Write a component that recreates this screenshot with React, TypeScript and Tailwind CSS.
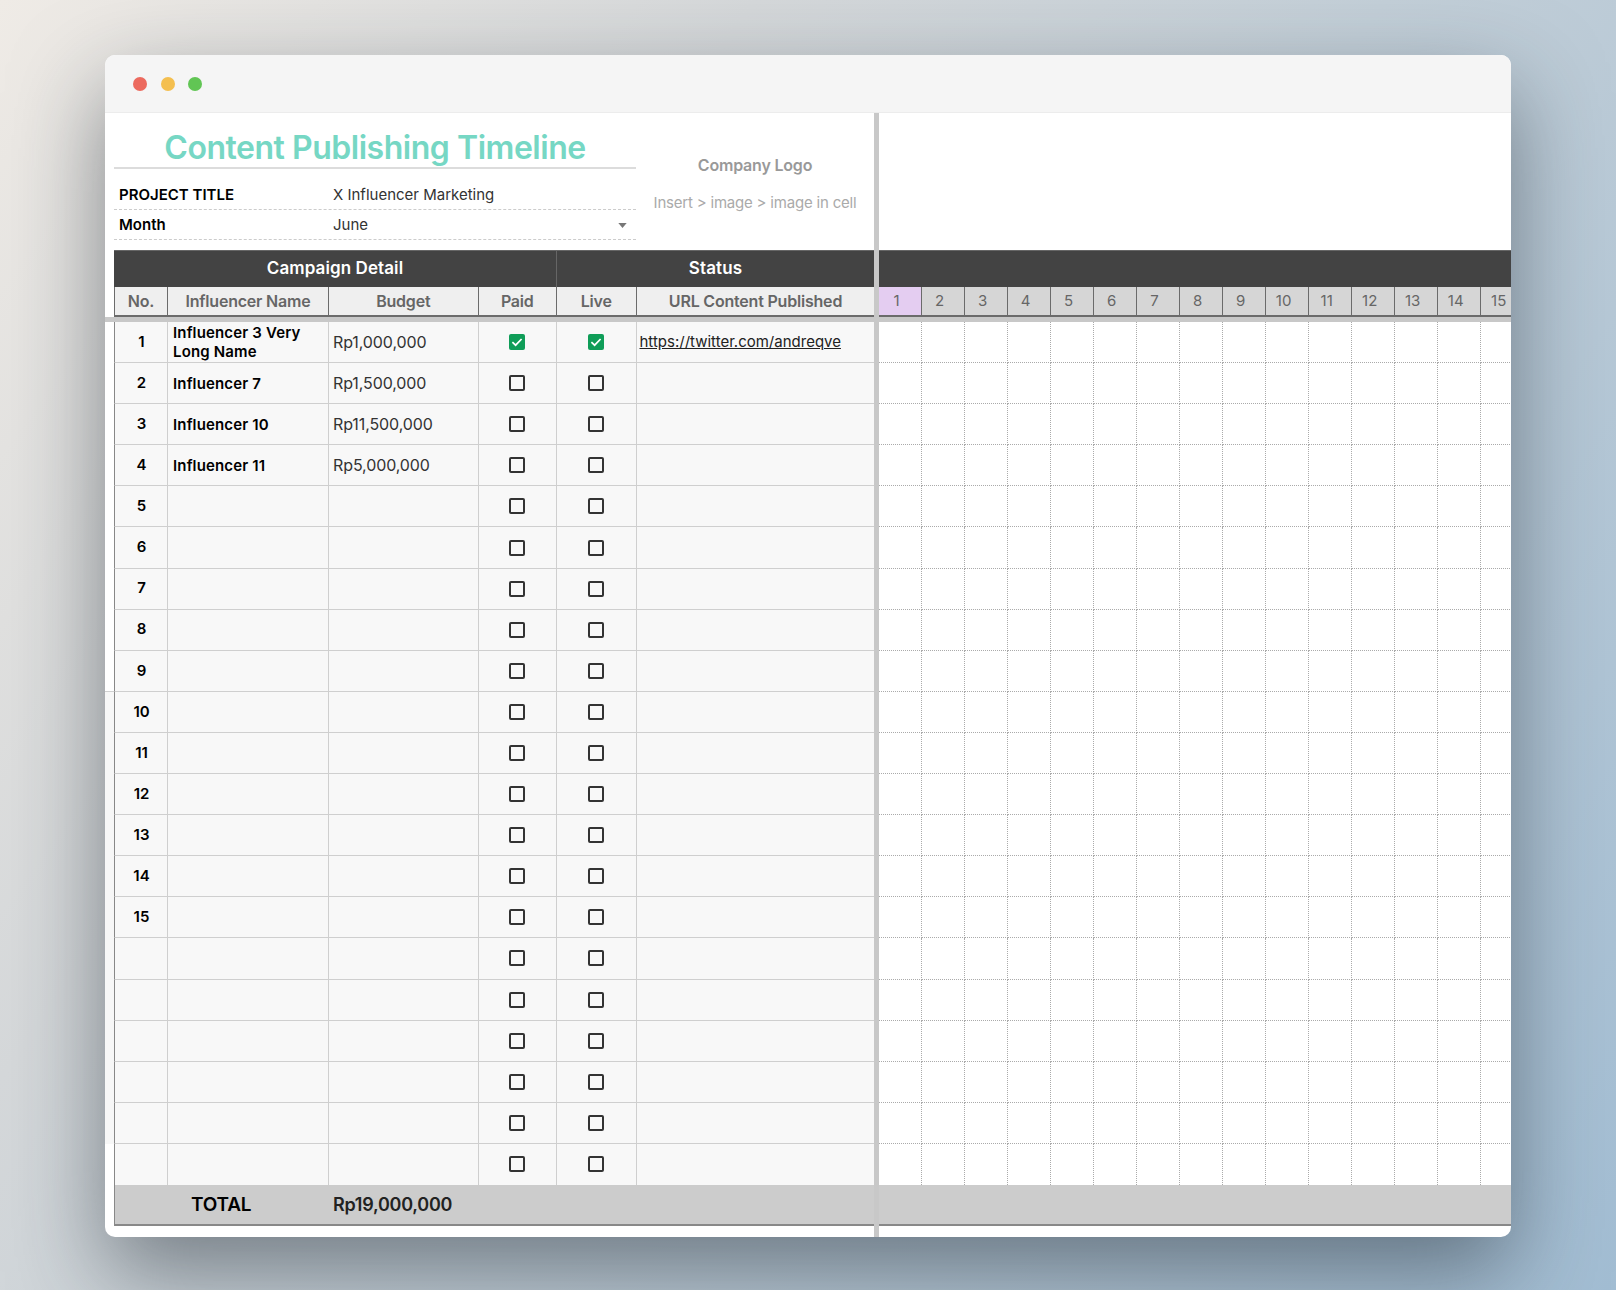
const font = "font-['Inter','Noto_Sans',sans-serif]";

const rows = [
  { no: "1", name: "Influencer 3 Very Long Name", budget: "Rp1,000,000", paid: true, live: true, url: "https://twitter.com/andreqve" },
  { no: "2", name: "Influencer 7", budget: "Rp1,500,000" },
  { no: "3", name: "Influencer 10", budget: "Rp11,500,000" },
  { no: "4", name: "Influencer 11", budget: "Rp5,000,000" },
  ...["5", "6", "7", "8", "9", "10", "11", "12", "13", "14", "15", "", "", "", "", "", ""].map((no) => ({
    no,
    name: "",
    budget: "",
  })),
] as { no: string; name: string; budget: string; paid?: boolean; live?: boolean; url?: string }[];

const days = Array.from({ length: 15 }, (_, i) => i + 1);

const Checkbox = ({ checked }: { checked?: boolean }) =>
  checked ? (
    <span className="flex h-[16px] w-[16px] items-center justify-center rounded-[2px] bg-[#0f9d58]">
      <svg viewBox="0 0 16 16" className="h-[16px] w-[16px]" fill="none" stroke="#fff" strokeWidth="1.7">
        <path d="M3.4 8.2 6.6 11.2 12.6 5" />
      </svg>
    </span>
  ) : (
    <span className="block h-[16px] w-[16px] rounded-[2px] border-2 border-[#333]" />
  );

const SubHead = ({ children, last }: { children: string; last?: boolean }) => (
  <div
    className={`flex items-center justify-center border-b-2 border-[#6b6b6b] text-[16px] font-semibold tracking-[-0.2px] text-[#666] ${
      last ? "" : "border-r border-r-[#6b6b6b]"
    }`}
  >
    {children}
  </div>
);

export default function App() {
  return (
    <div
      className={`${font} h-[1290px] w-[1616px] overflow-hidden bg-[linear-gradient(125deg,#efebe6_0%,#d5d8da_30%,#c3cfd8_55%,#a2bdd3_100%)] pt-[55px] pl-[105px]`}
    >
      <div className="h-[1182px] w-[1406px] overflow-hidden rounded-[10px] bg-white shadow-[0_36px_90px_rgba(30,40,50,0.5)]">
        {/* title bar */}
        <div className="flex h-[58px] items-center gap-[13.5px] border-b border-[#ececec] bg-[#f5f5f5] pl-[28px]">
          <span className="h-[14px] w-[14px] rounded-full bg-[#ec6a5e]" />
          <span className="h-[14px] w-[14px] rounded-full bg-[#f4bf4f]" />
          <span className="h-[14px] w-[14px] rounded-full bg-[#61c554]" />
        </div>

        <div className="flex h-[1124px]">
          {/* left side */}
          <div className="w-[769px] shrink-0">
            <div className="flex h-[137px] pl-[9px]">
              <div className="w-[522px] shrink-0">
                <div className="flex h-[56px] items-end justify-center border-b-2 border-[#dcdcdc]">
                  <h1 className="text-[32px] leading-[38px] font-semibold tracking-[-0.47px] text-[#76d7c4]">
                    Content Publishing Timeline
                  </h1>
                </div>
                <div className="flex h-[41px] items-end border-b border-dashed border-[#cccccc] pb-[3px] text-[15px] text-black">
                  <span className="w-[219px] pl-[5px] font-semibold">PROJECT TITLE</span>
                  <span className="text-[#333]">X Influencer Marketing</span>
                </div>
                <div className="flex h-[30px] items-center border-b border-dashed border-[#cccccc] pt-[1px] text-[15px] text-black">
                  <span className="w-[219px] pl-[5px] font-semibold">Month</span>
                  <span className="flex-1 text-[#333]">June</span>
                  <svg viewBox="0 0 10 6" className="mr-[9px] h-[5px] w-[9px]" fill="#777">
                    <path d="M0 0h10L5 6z" />
                  </svg>
                </div>
              </div>
              <div className="flex flex-1 flex-col items-center pt-[41px] text-[#a0a0a0]">
                <span className="text-[16px] leading-[22px] font-semibold tracking-[-0.2px] text-[#999]">Company Logo</span>
                <span className="mt-[16px] text-[15px] leading-[22px] tracking-[-0.2px] text-[#aaa]">
                  Insert &gt; image &gt; image in cell
                </span>
              </div>
            </div>

            {/* table head */}
            <div className="pl-[9px]">
              <div className="flex h-[37px] border-t border-[#666] bg-[#434343] pb-[1px] text-[17px] font-semibold tracking-[0.1px] text-white">
                <div className="flex w-[442px] items-center justify-center">Campaign Detail</div>
                <div className="-mb-[1px] flex flex-1 items-center justify-center border-l border-[#666] pb-[1px]">Status</div>
              </div>
              <div className="grid h-[30px] grid-cols-[53px_161px_149.5px_78.5px_79.5px_238px] border-l border-[#6b6b6b] bg-[#efefef]">
                <SubHead>No.</SubHead>
                <SubHead>Influencer Name</SubHead>
                <SubHead>Budget</SubHead>
                <SubHead>Paid</SubHead>
                <SubHead>Live</SubHead>
                <SubHead last>URL Content Published</SubHead>
              </div>
            </div>
            <div className="h-[5px] bg-[#c8c8c8]" />

            {/* table body */}
            {rows.map((row, i) => (
              <div
                key={i}
                className="grid h-[41.1px] grid-cols-[9px_54px_161px_149.5px_78.5px_79.5px_237px]"
              >
                <div
                  className={`${i >= 9 && i < 20 ? "bg-[#f7f7f7]" : "bg-white"} ${
                    i === 8 ? "border-b border-[#d0d0d0]" : ""
                  }`}
                />
                <div
                  className={`flex items-center justify-center border-r border-l border-r-[#cfcfcf] border-l-[#888] bg-[#f8f8f8] pl-[1px] text-[15px] font-semibold text-black ${
                    i < 20 ? "border-b border-b-[#cfcfcf]" : ""
                  }`}
                >
                  {row.no}
                </div>
                <div
                  className={`flex items-center border-r border-[#cfcfcf] bg-[#f8f8f8] pl-[5px] text-[15px] leading-[19px] font-semibold tracking-[0.15px] text-black ${
                    i < 20 ? "border-b" : ""
                  }`}
                >
                  {row.name}
                </div>
                <div
                  className={`flex items-center border-r border-[#cfcfcf] bg-[#f8f8f8] pl-[4px] text-[16px] tracking-[-0.1px] text-[#333] ${
                    i < 20 ? "border-b" : ""
                  }`}
                >
                  {row.budget}
                </div>
                <div
                  className={`flex items-center justify-center border-r border-[#cfcfcf] bg-[#f8f8f8] ${
                    i < 20 ? "border-b" : ""
                  }`}
                >
                  <Checkbox checked={row.paid} />
                </div>
                <div
                  className={`flex items-center justify-center border-r border-[#cfcfcf] bg-[#f8f8f8] ${
                    i < 20 ? "border-b" : ""
                  }`}
                >
                  <Checkbox checked={row.live} />
                </div>
                <div
                  className={`flex items-center bg-[#f8f8f8] pl-[3px] text-[15px] text-[#222] underline ${
                    i < 20 ? "border-b border-[#cfcfcf]" : ""
                  }`}
                >
                  {row.url}
                </div>
              </div>
            ))}

            {/* total */}
            <div className="pl-[9px]">
              <div className="flex h-[41px] items-center border-b-2 border-l border-[#888] bg-[#cccccc] pt-[1px] text-black">
                <span className="w-[218px] pl-[76px] text-[19px] font-semibold tracking-[-0.2px]">TOTAL</span>
                <span className="text-[18px] font-semibold tracking-[-0.25px] text-[#222]">Rp19,000,000</span>
              </div>
            </div>
          </div>

          {/* frozen column divider */}
          <div className="w-[5px] shrink-0 bg-[#c8c8c8]" />

          {/* timeline side */}
          <div className="min-w-0 flex-1 overflow-hidden">
            <div className="h-[137px]" />
            <div className="h-[37px] border-t border-[#666] bg-[#434343]" />
            <div className="flex h-[30px]">
              {days.map((d) => (
                <div
                  key={d}
                  className={`flex w-[43.03px] shrink-0 items-center justify-center border-r border-b-2 border-[#6b6b6b] pt-[1px] pr-[7px] text-[15px] text-[#666] ${
                    d === 1 ? "bg-[#e4cdf1]" : "bg-[#d6d6d6]"
                  }`}
                >
                  {d}
                </div>
              ))}
            </div>
            <div className="h-[5px] bg-[#c8c8c8]" />
            {rows.map((_, i) => (
              <div key={i} className="flex h-[41.1px]">
                {days.map((d) => (
                  <div
                    key={d}
                    className={`w-[43.03px] shrink-0 border-r border-dotted border-[#aaa] ${
                      i < 20 ? "border-b" : ""
                    }`}
                  />
                ))}
              </div>
            ))}
            <div className="h-[41px] border-b-2 border-[#888] bg-[#cccccc]" />
          </div>
        </div>
      </div>
    </div>
  );
}
